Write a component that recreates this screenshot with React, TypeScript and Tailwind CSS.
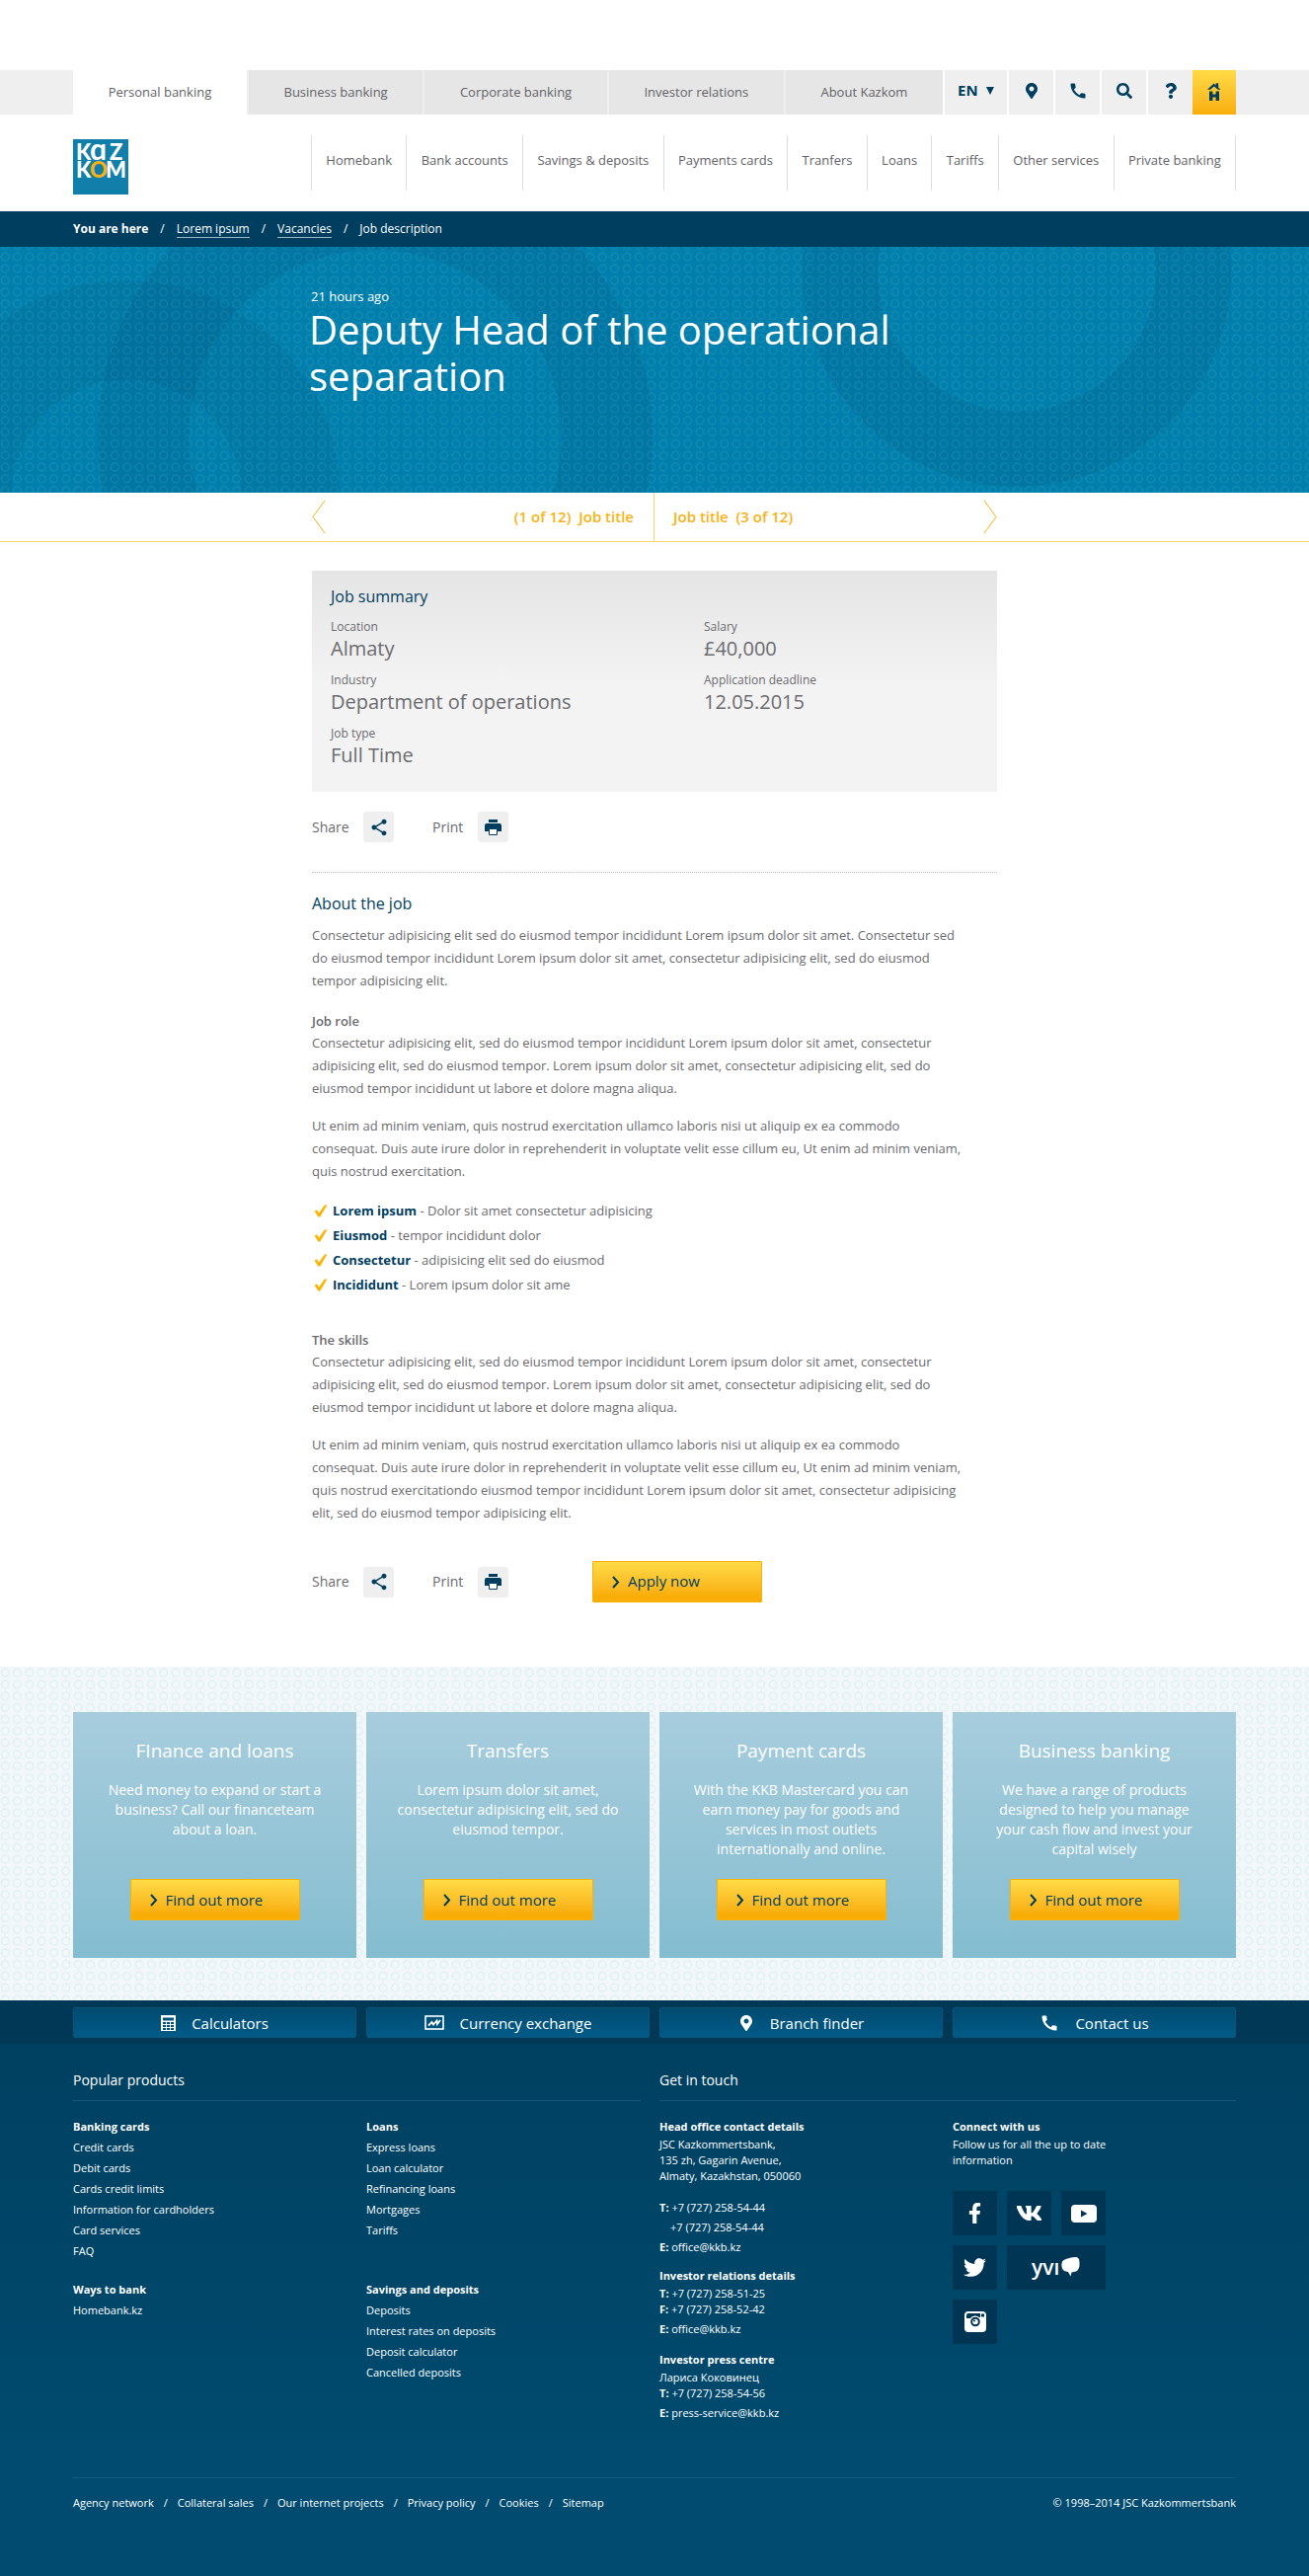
import type { ReactNode } from "react";
import { FaFacebookF, FaMapMarkerAlt, FaQuestion, FaSearch, FaTwitter, FaVk } from "react-icons/fa";
import { MdCall, MdShare } from "react-icons/md";

const tabs = ["Personal banking", "Business banking", "Corporate banking", "Investor relations", "About Kazkom"];

const navItems = [
  "Homebank",
  "Bank accounts",
  "Savings & deposits",
  "Payments cards",
  "Tranfers",
  "Loans",
  "Tariffs",
  "Other services",
  "Private banking",
];

const summary = [
  ["Location", "Almaty"],
  ["Salary", "£40,000"],
  ["Industry", "Department of operations"],
  ["Application deadline", "12.05.2015"],
  ["Job type", "Full Time"],
];

const bullets = [
  ["Lorem ipsum", "Dolor sit amet consectetur adipisicing"],
  ["Eiusmod", "tempor incididunt dolor"],
  ["Consectetur", "adipisicing elit sed do eiusmod"],
  ["Incididunt", "Lorem ipsum dolor sit ame"],
];

const cards = [
  ["FInance and loans", "Need money to expand or start a\nbusiness? Call our financeteam\nabout a loan."],
  ["Transfers", "Lorem ipsum dolor sit amet,\nconsectetur adipisicing elit, sed do\neiusmod tempor."],
  [
    "Payment cards",
    "With the KKB Mastercard you can\nearn money pay for goods and\nservices in most outlets\ninternationally and online.",
  ],
  [
    "Business banking",
    "We have a range of products\ndesigned to help you manage\nyour cash flow and invest your\ncapital wisely",
  ],
];

const productGroups = [
  {
    title: "Banking cards",
    links: ["Credit cards", "Debit cards", "Cards credit limits", "Information for cardholders", "Card services", "FAQ"],
  },
  { title: "Loans", links: ["Express loans", "Loan calculator", "Refinancing loans", "Mortgages", "Tariffs"] },
  { title: "Ways to bank", links: ["Homebank.kz"] },
  {
    title: "Savings and deposits",
    links: ["Deposits", "Interest rates on deposits", "Deposit calculator", "Cancelled deposits"],
  },
];

const legalLinks = ["Agency network", "Collateral sales", "Our internet projects", "Privacy policy", "Cookies", "Sitemap"];

function Container({ children, className = "" }: { children: ReactNode; className?: string }) {
  return <div className={`mx-auto w-full max-w-[1178px] ${className}`}>{children}</div>;
}

function RingPattern({ id, y, color }: { id: string; y: number; color: string }) {
  return (
    <>
      <defs>
        <pattern id={id} x="-1" y={y} width="12.35" height="11.82" patternUnits="userSpaceOnUse">
          <circle cx="6.1" cy="5.9" r="3.9" fill="none" stroke={color} strokeWidth="1.4" />
        </pattern>
      </defs>
      <rect width="100%" height="100%" fill={`url(#${id})`} />
    </>
  );
}

function Logo() {
  return (
    <a href="#" aria-label="Kazkom" className="block">
      <svg width="56" height="56" viewBox="0 0 56 56" fontFamily="Lato, sans-serif" fontWeight="900" fontSize="22">
        <rect width="56" height="56" fill="#117fa9" />
        <text x="3 17 37" y="21" fill="#fff">
          K
          <tspan fontSize="30" fontWeight="700">
            ɑ
          </tspan>
          Z
        </text>
        <text x="3 17 33" y="39" fill="#fff">
          K<tspan fill="#f9b214">O</tspan>M
        </text>
      </svg>
    </a>
  );
}

function HomebankIcon() {
  return (
    <svg width="14" height="18" viewBox="0 0 14 18" fill="#003e5f">
      <path d="M0 6.8 6.6 0.6 8.6 2.4V0.2h2.6v4.6L13.6 6.8H10.8L6.8 3.4 3 6.8z" />
      <path d="M2 8.4h3.4v3.2h3.2V8.4H12V18H8.6v-3.6H5.4V18H2z" />
    </svg>
  );
}

function PrintIcon() {
  return (
    <svg width="17" height="16" viewBox="0 0 17 16" fill="#003e5f">
      <path d="M4 0h9v3H4z" />
      <path d="M2 4h13a2 2 0 0 1 2 2v6h-4V9.500H4V12H0V6a2 2 0 0 1 2-2z" />
      <path d="M4.500 9.500h8v6h-8z" fill="#fff" stroke="#003e5f" />
    </svg>
  );
}

function CheckIcon() {
  return (
    <svg width="14" height="13" viewBox="0 0 14 13" fill="#fbb409">
      <path d="M0.500 6.600 3.200 5.400 5 8.400 10.600 0.800 13.500 0.300 6.300 12.400 4.300 12.400z" />
    </svg>
  );
}

function CalculatorIcon() {
  return (
    <svg width="15" height="16" viewBox="0 0 15 16">
      <path d="M0 0h15v16H0z" fill="#fff" />
      <path
        d="M2 2.500h11v3H2zM2 7h3v2H2zM6 7h3v2H6zM10 7h3v2h-3zM2 10h3v2H2zM6 10h3v2H6zM10 10h3v2h-3zM2 13h3v2H2zM6 13h3v2H6zM10 13h3v2h-3z"
        fill="#00507a"
      />
    </svg>
  );
}

function ExchangeIcon() {
  return (
    <svg width="20" height="15" viewBox="0 0 20 15" fill="none" stroke="#fff">
      <rect x="1" y="1" width="18" height="13" strokeWidth="1.600" />
      <path d="M4 10.500 7.500 7 9 9.500 12.500 5.500 13 9 16 5" strokeWidth="1.800" />
    </svg>
  );
}

function YoutubeIcon() {
  return (
    <svg width="26" height="18" viewBox="0 0 26 18">
      <rect width="26" height="18" rx="4" fill="#fff" />
      <path d="M10 5.500v7l6.500-3.500z" fill="#003553" />
    </svg>
  );
}

function InstagramIcon() {
  return (
    <svg width="22" height="21" viewBox="0 0 22 21">
      <rect width="22" height="21" rx="4" fill="#fff" />
      <path d="M2 7V4a2 2 0 0 1 2-2h12v4h-1a6 6 0 0 0-9 1z" fill="#003553" />
      <rect x="17" y="2.500" width="3" height="3" fill="#003553" />
      <circle cx="11" cy="10.500" r="5.400" fill="#fff" />
      <circle cx="11" cy="10.500" r="3.800" fill="none" stroke="#003553" strokeWidth="2" />
      <circle cx="10" cy="9.500" r="1" fill="#003553" />
    </svg>
  );
}

function YviLogo() {
  return (
    <svg width="52" height="34" viewBox="0 0 52 34" fill="#fff">
      <text x="1" y="24" fontFamily="'Open Sans', sans-serif" fontWeight="600" fontSize="21">
        yvı
      </text>
      <g transform="translate(0 5)">
        <path d="M32 5.500Q34 2 46 1 49 1 49.500 6 50 14 46 15.500L41.500 16.500 40.500 20.500 38 16Q33 15.500 32 12.500 30.500 9 32 5.500z" />
      </g>
    </svg>
  );
}

function IconButton({ label, children }: { label: string; children: ReactNode }) {
  return (
    <button
      type="button"
      aria-label={label}
      className="flex w-[45px] items-center justify-center bg-[#efefef] pb-1 text-[#003e5f]"
    >
      {children}
    </button>
  );
}

function YellowButton({ children }: { children: ReactNode }) {
  return (
    <button
      type="button"
      className="flex h-[42px] w-[172px] items-center gap-2 rounded-[1px] border border-[#f8b00a] bg-linear-to-b from-[#ffdb45] to-[#f9ae07] to-85% pl-[19px] text-[15px] text-[#003e5f]"
    >
      <svg width="8" height="13" viewBox="0 0 8 13" fill="none" stroke="#003e5f" strokeWidth="2">
        <path d="M1 1l5 5.500L1 12" />
      </svg>
      {children}
    </button>
  );
}

function ShareRow({ children }: { children?: ReactNode }) {
  return (
    <div className="flex items-center text-sm text-[#6b6b70]">
      <span className="w-[52px]">Share</span>
      <button type="button" aria-label="Share" className="flex size-[31px] items-center justify-center rounded-[3px] bg-[#efefef]">
        <MdShare size={20} color="#003e5f" />
      </button>
      <span className="ml-[39px] w-[46px]">Print</span>
      <button type="button" aria-label="Print" className="flex size-[31px] items-center justify-center rounded-[3px] bg-[#efefef]">
        <PrintIcon />
      </button>
      {children}
    </div>
  );
}

function Header() {
  return (
    <header className="pt-[71px]">
      <div className="bg-[#efefef]">
        <Container className="flex h-[45px]">
          <nav aria-label="Sections" className="flex flex-1 text-[13px] text-[#636367]">
            {tabs.map((t, i) => (
              <a
                key={t}
                href="#"
                className={
                  i === 0
                    ? "flex flex-auto items-center justify-center bg-white"
                    : "flex flex-auto items-center justify-center border-l-2 border-[#efefef] bg-[#e6e6e6]"
                }
              >
                {t}
              </a>
            ))}
          </nav>
          <div className="flex gap-0.5 bg-white pl-0.5">
            <label className="flex w-[63px] items-center justify-center gap-2 bg-[#efefef] pb-1">
              <select aria-label="Language" className="appearance-none bg-transparent text-[15px] font-bold text-[#003e5f]">
                <option>EN</option>
              </select>
              <svg width="8" height="8" viewBox="0 0 8 8" fill="#003e5f">
                <path d="M0 0h8L4 8z" />
              </svg>
            </label>
            <IconButton label="Branches">
              <FaMapMarkerAlt size={16} />
            </IconButton>
            <IconButton label="Call">
              <MdCall size={20} />
            </IconButton>
            <IconButton label="Search">
              <FaSearch size={16} />
            </IconButton>
            <div className="flex">
              <IconButton label="Help">
                <FaQuestion size={16} />
              </IconButton>
              <button
                type="button"
                aria-label="Homebank"
                className="flex w-11 items-center justify-center bg-linear-to-b from-[#ffdb45] to-[#f9ae07] pb-0.5"
              >
                <HomebankIcon />
              </button>
            </div>
          </div>
        </Container>
      </div>
      <Container className="flex h-[98px] justify-between">
        <div className="pt-[25px]">
          <Logo />
        </div>
        <nav aria-label="Main" className="mt-[21px] flex h-14 w-[937px] border-r border-[#dedede] text-[13px] text-[#636367]">
          {navItems.map((n) => (
            <a key={n} href="#" className="flex-auto border-l border-[#dedede] pt-[15px] text-center leading-5">
              {n}
            </a>
          ))}
        </nav>
      </Container>
      <div className="bg-[#003e5f]">
        <Container>
          <nav aria-label="Breadcrumb" className="flex h-9 items-center gap-3 text-xs text-white">
            <b>You are here</b>
            <span>/</span>
            <a href="#" className="border-b border-[#9fb7c5] leading-4">
              Lorem ipsum
            </a>
            <span>/</span>
            <a href="#" className="border-b border-[#9fb7c5] leading-4">
              Vacancies
            </a>
            <span>/</span>
            <span>Job description</span>
          </nav>
        </Container>
      </div>
    </header>
  );
}

function Hero() {
  return (
    <section className="relative h-[249px] overflow-hidden bg-[#007fac]">
      <svg className="absolute inset-0 size-full" aria-hidden="true">
        <g fill="none" stroke="#004f78">
          <circle cx="380" cy="192" r="235" strokeWidth="92" strokeOpacity="0.18" />
          <circle cx="128" cy="250" r="166" strokeWidth="100" strokeOpacity="0.15" />
          <circle cx="1030" cy="26" r="179" strokeWidth="76" strokeOpacity="0.18" />
        </g>
        <RingPattern id="hero-rings" y={4.4} color="rgba(110,190,215,0.17)" />
      </svg>
      <div className="relative mx-auto max-w-[700px] pt-10 text-white">
        <p className="pl-0.5 text-[13px] leading-5">21 hours ago</p>
        <h1 className="text-[40px] leading-[47px]">
          Deputy Head of the operational
          <br />
          separation
        </h1>
      </div>
    </section>
  );
}

function Pager() {
  return (
    <nav aria-label="Jobs" className="border-b border-[#fdd36b] text-[15px] font-semibold text-[#f9b214]">
      <div className="mx-auto grid h-[49px] max-w-[694px] grid-cols-2">
        <a href="#" className="flex items-center justify-between border-r border-[#fdd36b] pr-5 whitespace-pre">
          <svg width="14" height="35" viewBox="0 0 14 35" fill="none" stroke="#f9b214">
            <path d="M13 1 1 17.500 13 34" />
          </svg>
          {"(1 of 12)  Job title"}
        </a>
        <a href="#" className="flex items-center justify-between pl-[19px] whitespace-pre">
          {"Job title  (3 of 12)"}
          <svg width="14" height="35" viewBox="0 0 14 35" fill="none" stroke="#f9b214">
            <path d="M1 1l12 16.500L1 34" />
          </svg>
        </a>
      </div>
    </nav>
  );
}

function JobArticle() {
  return (
    <main className="mx-auto max-w-[694px] pt-[29px] pb-[65px] text-[13px] leading-[23px] text-[#6b6b70]">
      <section className="h-56 bg-linear-to-b from-[#e5e5e5] to-[#f3f3f3] to-50% px-[19px] pt-3.5">
        <h2 className="text-base leading-6 text-[#003e5f]">Job summary</h2>
        <dl className="mt-2.5 grid grid-cols-[378fr_278fr]">
          {summary.map(([k, v]) => (
            <div key={k} className="h-[54px]">
              <dt className="text-xs leading-[18px]">{k}</dt>
              <dd className="text-xl leading-[26px]">{v}</dd>
            </div>
          ))}
        </dl>
      </section>
      <div className="mt-5">
        <ShareRow />
      </div>
      <hr className="mt-[30px] border-0 border-t border-dotted border-[#bdbdbd]" />
      <h2 className="mt-[19px] text-base leading-6 text-[#003e5f]">About the job</h2>
      <p className="mt-[9px] pr-8">
        Consectetur adipisicing elit sed do eiusmod tempor incididunt Lorem ipsum dolor sit amet. Consectetur sed do
        eiusmod tempor incididunt Lorem ipsum dolor sit amet, consectetur adipisicing elit, sed do eiusmod tempor
        adipisicing elit.
      </p>
      <h3 className="mt-[18px] leading-[22px] font-semibold">Job role</h3>
      <p className="pr-8">
        Consectetur adipisicing elit, sed do eiusmod tempor incididunt Lorem ipsum dolor sit amet, consectetur
        adipisicing elit, sed do eiusmod tempor. Lorem ipsum dolor sit amet, consectetur adipisicing elit, sed do
        eiusmod tempor incididunt ut labore et dolore magna aliqua.
      </p>
      <p className="mt-[15px] pr-8">
        Ut enim ad minim veniam, quis nostrud exercitation ullamco laboris nisi ut aliquip ex ea commodo consequat. Duis
        aute irure dolor in reprehenderit in voluptate velit esse cillum eu, Ut enim ad minim veniam, quis nostrud
        exercitation.
      </p>
      <ul className="mt-4 leading-[25px]">
        {bullets.map(([b, t]) => (
          <li key={b} className="flex items-center gap-[5px] pl-0.5">
            <CheckIcon />
            <span>
              <b className="text-[#003e5f]">{b}</b> - {t}
            </span>
          </li>
        ))}
      </ul>
      <h3 className="mt-8 leading-[22px] font-semibold">The skills</h3>
      <p className="pr-8">
        Consectetur adipisicing elit, sed do eiusmod tempor incididunt Lorem ipsum dolor sit amet, consectetur
        adipisicing elit, sed do eiusmod tempor. Lorem ipsum dolor sit amet, consectetur adipisicing elit, sed do
        eiusmod tempor incididunt ut labore et dolore magna aliqua.
      </p>
      <p className="mt-[15px] pr-8">
        Ut enim ad minim veniam, quis nostrud exercitation ullamco laboris nisi ut aliquip ex ea commodo consequat. Duis
        aute irure dolor in reprehenderit in voluptate velit esse cillum eu, Ut enim ad minim veniam, quis nostrud
        exercitationdo eiusmod tempor incididunt Lorem ipsum dolor sit amet, consectetur adipisicing elit, sed do
        eiusmod tempor adipisicing elit.
      </p>
      <div className="mt-[37px]">
        <ShareRow>
          <div className="ml-[85px]">
            <YellowButton>Apply now</YellowButton>
          </div>
        </ShareRow>
      </div>
    </main>
  );
}

function Promos() {
  return (
    <section className="relative bg-[#f2f8fa] pt-[46px] pb-[43px]">
      <svg className="absolute inset-0 size-full" aria-hidden="true">
        <RingPattern id="promo-rings" y={0.2} color="#e1eff3" />
      </svg>
      <Container className="relative grid grid-cols-4 gap-2.5">
        {cards.map(([title, text]) => (
          <article
            key={title}
            className="flex flex-col items-center bg-linear-to-b from-[#a7cddd] to-[#84bdd0] px-5 pt-[25px] pb-[38px] text-center text-white"
          >
            <h2 className="text-[19px] leading-7">{title}</h2>
            <p className="mt-4 mb-5 min-h-20 text-sm leading-5 whitespace-pre-line">{text}</p>
            <YellowButton>Find out more</YellowButton>
          </article>
        ))}
      </Container>
    </section>
  );
}

function Contact({ k, children }: { k: string; children: ReactNode }) {
  return (
    <>
      <b>{k}:</b> {children}
    </>
  );
}

function SocialLink({ label, wide = false, children }: { label: string; wide?: boolean; children: ReactNode }) {
  return (
    <a
      href="#"
      aria-label={label}
      className={
        wide
          ? "col-span-2 flex h-[45px] items-center justify-center bg-[#003553]"
          : "flex h-[45px] items-center justify-center bg-[#003553]"
      }
    >
      {children}
    </a>
  );
}

function Footer() {
  const quick = [
    { label: "Calculators", icon: <CalculatorIcon /> },
    { label: "Currency exchange", icon: <ExchangeIcon /> },
    { label: "Branch finder", icon: <FaMapMarkerAlt size={16} /> },
    { label: "Contact us", icon: <MdCall size={20} /> },
  ];
  return (
    <footer className="bg-linear-to-b from-[#003f5f] to-[#004b6f] to-80% text-[11px] leading-5 text-white">
      <div className="bg-[#003855] pt-[7px] pb-1.5">
        <Container className="grid grid-cols-4 gap-2.5">
          {quick.map((q) => (
            <a
              key={q.label}
              href="#"
              className="flex h-[31px] items-center justify-center gap-4 rounded-[2px] border border-[#0d5478] bg-linear-to-b from-[#004a70] to-[#005b87] text-[15px]"
            >
              {q.icon}
              {q.label}
            </a>
          ))}
        </Container>
      </div>
      <Container className="grid grid-cols-2 gap-2.5 pt-[25px]">
        <section>
          <h2 className="mr-[9px] h-[33px] border-b border-[#14587a] text-sm leading-6">Popular products</h2>
          <div className="mt-[15px] grid grid-cols-2 gap-x-2.5 gap-y-[18px] leading-[21px]">
            {productGroups.map((g) => (
              <div key={g.title}>
                <h3 className="font-bold">{g.title}</h3>
                <ul>
                  {g.links.map((l) => (
                    <li key={l}>
                      <a href="#">{l}</a>
                    </li>
                  ))}
                </ul>
              </div>
            ))}
          </div>
        </section>
        <section>
          <h2 className="h-[33px] border-b border-[#14587a] text-sm leading-6">Get in touch</h2>
          <div className="mt-[15px] grid grid-cols-2 gap-x-2.5">
            <div>
              <h3 className="leading-[21px] font-bold">Head office contact details</h3>
              <address className="leading-4 not-italic">
                JSC Kazkommertsbank,
                <br />
                135 zh, Gagarin Avenue,
                <br />
                Almaty, Kazakhstan, 050060
              </address>
              <p className="mt-3.5">
                <Contact k="T">+7 (727) 258-54-44</Contact>
              </p>
              <p className="pl-[11px]">+7 (727) 258-54-44</p>
              <p>
                <Contact k="E">office@kkb.kz</Contact>
              </p>
              <h3 className="mt-2 leading-[21px] font-bold">Investor relations details</h3>
              <p className="leading-4">
                <Contact k="T">+7 (727) 258-51-25</Contact>
              </p>
              <p className="leading-4">
                <Contact k="F">+7 (727) 258-52-42</Contact>
              </p>
              <p className="leading-6">
                <Contact k="E">office@kkb.kz</Contact>
              </p>
              <h3 className="mt-2 leading-[21px] font-bold">Investor press centre</h3>
              <p className="leading-4">Лариса Коковинец</p>
              <p className="leading-4">
                <Contact k="T">+7 (727) 258-54-56</Contact>
              </p>
              <p className="leading-6">
                <Contact k="E">press-service@kkb.kz</Contact>
              </p>
            </div>
            <div>
              <h3 className="leading-[21px] font-bold">Connect with us</h3>
              <p className="max-w-[170px] leading-4">Follow us for all the up to date information</p>
              <div className="mt-[23px] grid w-[155px] grid-cols-3 gap-2.5">
                <SocialLink label="Facebook">
                  <FaFacebookF size={21} />
                </SocialLink>
                <SocialLink label="VK">
                  <FaVk size={27} />
                </SocialLink>
                <SocialLink label="YouTube">
                  <YoutubeIcon />
                </SocialLink>
                <SocialLink label="Twitter">
                  <FaTwitter size={23} />
                </SocialLink>
                <SocialLink label="Yvision" wide>
                  <YviLogo />
                </SocialLink>
                <SocialLink label="Instagram">
                  <InstagramIcon />
                </SocialLink>
              </div>
            </div>
          </div>
        </section>
      </Container>
      <Container className="pt-[53px] pb-16">
        <div className="flex justify-between border-t border-[#14587a] pt-[15px]">
          <ul className="flex gap-2.5">
            {legalLinks.map((l, i) => (
              <li key={l} className="flex gap-2.5">
                {i > 0 && <span>/</span>}
                <a href="#">{l}</a>
              </li>
            ))}
          </ul>
          <p>© 1998–2014 JSC Kazkommertsbank</p>
        </div>
      </Container>
    </footer>
  );
}

export default function App() {
  return (
    <div className="bg-white font-['Open_Sans',sans-serif]">
      <Header />
      <Hero />
      <Pager />
      <JobArticle />
      <Promos />
      <Footer />
    </div>
  );
}
